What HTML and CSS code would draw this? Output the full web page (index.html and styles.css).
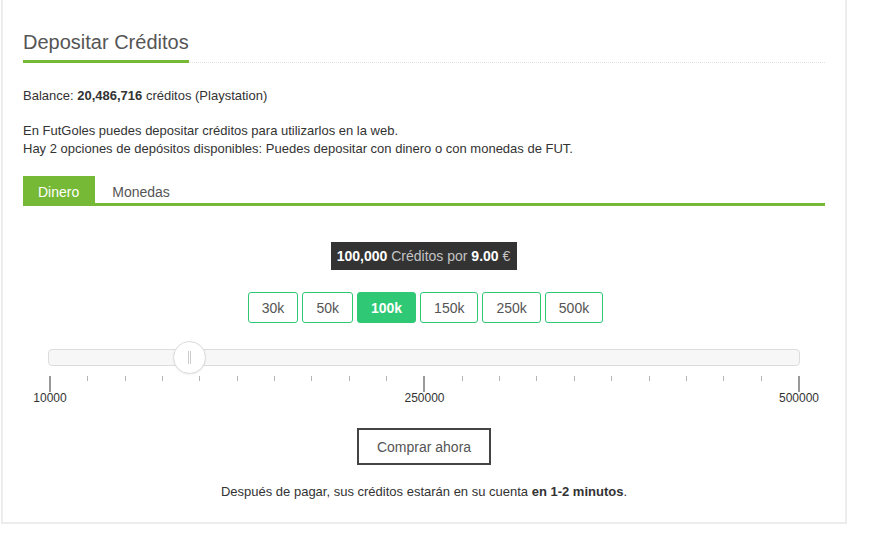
FILE: index.html
```html
<!DOCTYPE html>
<html lang="es">
  <head>
    <meta charset="UTF-8" />
    <meta name="viewport" content="width=device-width, initial-scale=1.0" />
    <title>Depositar Créditos</title>
    <link rel="stylesheet" href="styles.css">
  </head>
  <body>
    <div class="panel">
      <h2 class="panel-title"><span>Depositar Créditos</span></h2>

      <p class="balance">Balance: <b>20,486,716</b> créditos (Playstation)</p>

      <p class="intro">
        En FutGoles puedes depositar créditos para utilizarlos en la web.<br>
        Hay 2 opciones de depósitos disponibles: Puedes depositar con dinero o con monedas de FUT.
      </p>

      <ul class="tabs">
        <li class="tab active">Dinero</li>
        <li class="tab">Monedas</li>
      </ul>

      <div class="deposit">
        <div class="price-tip">
          <b>100,000</b> Créditos por <b>9.00</b> €
        </div>

        <div class="amounts">
          <button class="amount">30k</button>
          <button class="amount">50k</button>
          <button class="amount selected">100k</button>
          <button class="amount">150k</button>
          <button class="amount">250k</button>
          <button class="amount">500k</button>
        </div>

        <div class="slider">
          <div class="slider-track">
            <div class="slider-handle"><span></span></div>
          </div>
          <div class="ticks">
            <i class="major"></i><i></i><i></i><i></i><i></i><i></i><i></i><i></i><i></i><i></i>
            <i class="major"></i><i></i><i></i><i></i><i></i><i></i><i></i><i></i><i></i><i></i>
            <i class="major"></i>
          </div>
          <div class="tick-labels">
            <span>10000</span>
            <span>250000</span>
            <span>500000</span>
          </div>
        </div>

        <button class="buy-btn">Comprar ahora</button>

        <p class="note">Después de pagar, sus créditos estarán en su cuenta <b>en 1-2 minutos</b>.</p>
      </div>
    </div>
  </body>
</html>
```

FILE: styles.css
```css
/* styles.css */
body {
  font-family: "Liberation Sans", Arial, sans-serif;
  font-size: 13px;
  color: #333;
  background-color: #fff;
  margin: 0;
}

.panel {
  width: 802px;
  margin-left: 1px;
  padding: 30px 20px 21px 20px;
  border: 2px solid #ececec;
  border-top: none;
}

.panel-title {
  display: flex;
  margin: 0;
  font-size: 20px;
  font-weight: normal;
  line-height: 24px;
  color: #555;
  border-bottom: 1px dotted #e2e2e2;
}

.panel-title span {
  display: block;
  padding-bottom: 6px;
  border-bottom: 3px solid #76b936;
  margin-bottom: -1px;
}

.balance {
  margin: 24px 0 0 0;
  line-height: 18px;
}

.intro {
  margin: 17px 0 0 0;
  line-height: 18px;
}

.tabs {
  display: flex;
  list-style: none;
  margin: 18px 0 0 0;
  padding: 0;
  border-bottom: 3px solid #76b936;
}

.tab {
  padding: 5px 15px 0 15px;
  margin-right: 2px;
  height: 22px;
  line-height: 22px;
  font-size: 14px;
  color: #555;
}

.tab.active {
  padding: 5px 16px 0 15px;
  background-color: #76b936;
  color: white;
}

.deposit {
  display: flex;
  flex-direction: column;
  align-items: center;
}

.price-tip {
  margin-top: 36px;
  height: 28px;
  line-height: 28px;
  padding: 0 7px 0 6px;
  background-color: #333;
  color: #c4c4c4;
  font-size: 14px;
}

.price-tip b {
  color: white;
}

.amounts {
  display: flex;
  gap: 4px;
  margin-top: 22px;
  margin-left: 3px;
}

.amount {
  height: 31px;
  padding: 0 13px;
  font-family: inherit;
  font-size: 14px;
  color: #555;
  background: white;
  border: 1px solid #2fc874;
  border-radius: 3px;
}

.amount.selected {
  background-color: #2fc874;
  color: white;
  font-weight: bold;
}

.slider {
  align-self: stretch;
  margin: 26px 25px 0 25px;
}

.slider-track {
  position: relative;
  height: 15px;
  background-color: #f7f7f7;
  border: 1px solid #dcdcdc;
  border-radius: 4px;
}

.slider-handle {
  position: absolute;
  top: -9px;
  left: 124px;
  width: 31px;
  height: 31px;
  border: 1px solid #dadada;
  border-radius: 50%;
  background: white;
  box-shadow: 0 1px 2px rgba(0, 0, 0, 0.06);
  display: flex;
  justify-content: center;
  align-items: center;
}

.slider-handle span {
  width: 3px;
  height: 13px;
  border-left: 1px solid #ccc;
  border-right: 1px solid #ccc;
  box-sizing: border-box;
}

.ticks {
  display: flex;
  justify-content: space-between;
  align-items: flex-start;
  margin: 10px 0 0 1px;
}

.ticks i {
  display: block;
  width: 1px;
  height: 5px;
  background-color: #b4b4b4;
}

.ticks i.major {
  width: 2px;
  height: 16px;
  background-color: #999;
}

.tick-labels {
  display: flex;
  justify-content: space-between;
  margin: -1px 0 0 1px;
  font-size: 12px;
  line-height: 14px;
  color: #333;
}

.tick-labels span {
  width: 2px;
  display: flex;
  justify-content: center;
  white-space: nowrap;
}

.buy-btn {
  margin-top: 23px;
  height: 37px;
  padding: 0 18px;
  font-family: inherit;
  font-size: 14px;
  color: #555;
  background: white;
  border: 2px solid #444;
}

.note {
  margin: 18px 0 0 0;
  line-height: 18px;
}
```
